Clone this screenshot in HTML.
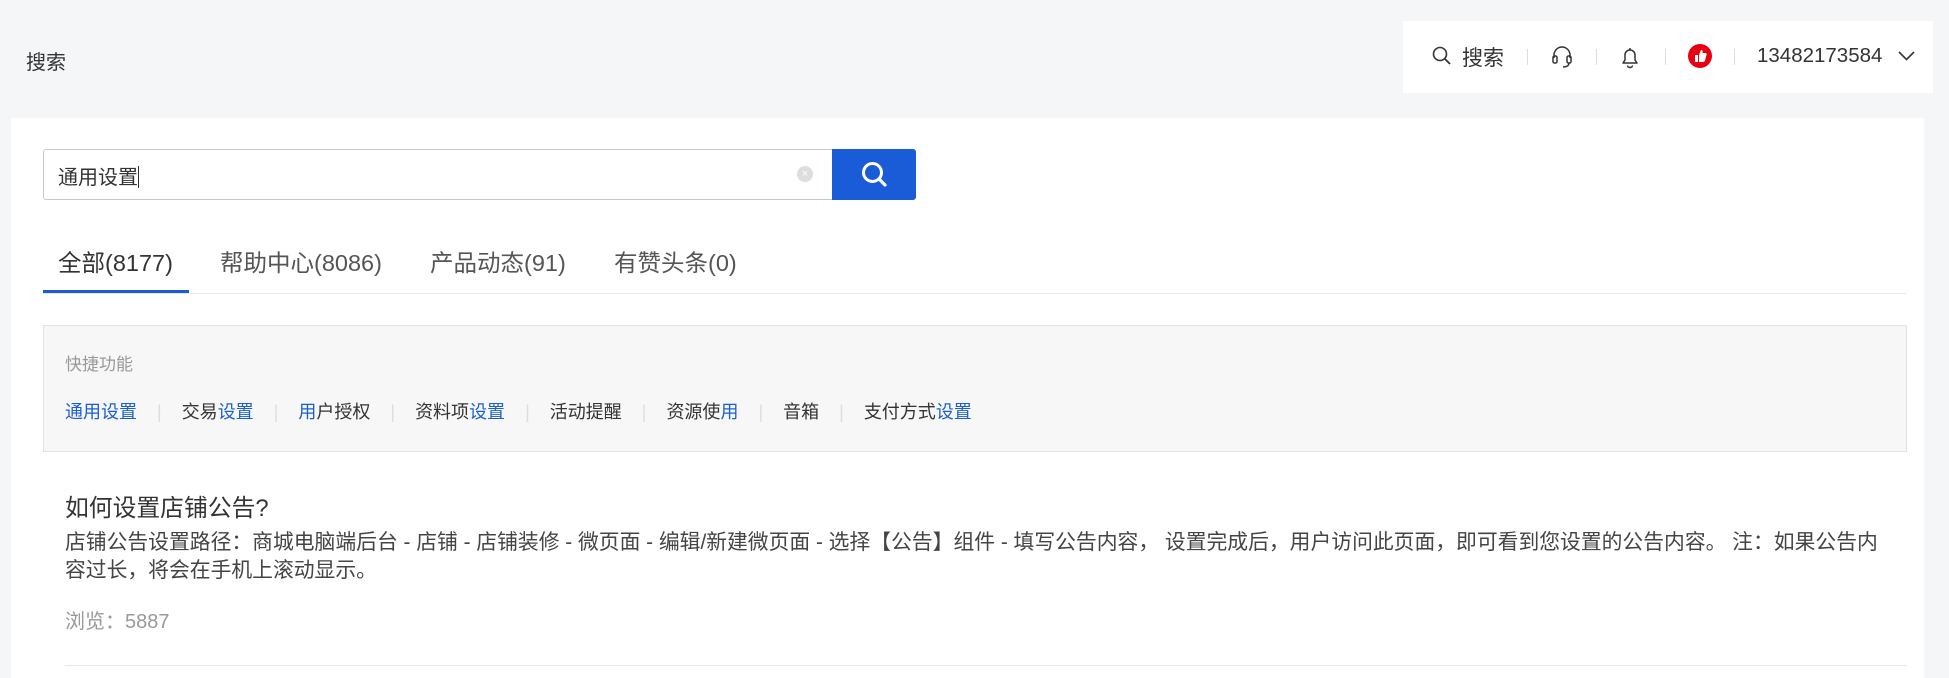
<!DOCTYPE html>
<html><head><meta charset="utf-8"><style>
*{margin:0;padding:0;box-sizing:border-box}
body{width:1949px;height:667px;background:#f5f6f8;font-family:"Liberation Sans","Noto Sans CJK SC",sans-serif;color:#333;position:relative;overflow:hidden}
.a{position:absolute;white-space:nowrap}
.blue{color:#1a5fd6}
.sep{position:absolute;width:1px;height:16px;background:#ddd}
.s{color:#ddd;margin:0 20px}
</style></head><body>
<div class="a" style="left:26px;top:46px;font-size:20px;color:#333">搜索</div>
<div class="a" style="left:1403px;top:21px;width:530px;height:72px;background:#fff"></div>
<svg class="a" style="left:1432px;top:46px" width="20" height="20" viewBox="0 0 20 20"><circle cx="8" cy="8" r="6.5" fill="none" stroke="#333" stroke-width="1.6"/><path d="M13 13l5 5" stroke="#333" stroke-width="1.8"/></svg>
<div class="a" style="left:1462px;top:42px;font-size:21px">搜索</div>
<div class="sep" style="left:1527px;top:49px"></div>
<svg class="a" style="left:1551px;top:45px" width="22" height="24" viewBox="0 0 22 24"><path d="M3 13V10a8 8 0 0 1 16 0v3" fill="none" stroke="#333" stroke-width="1.5"/><rect x="2" y="11" width="4" height="7" rx="1.5" fill="none" stroke="#333" stroke-width="1.5"/><rect x="16" y="11" width="4" height="7" rx="1.5" fill="none" stroke="#333" stroke-width="1.5"/><path d="M18 18c0 3-3 4-6 4" fill="none" stroke="#333" stroke-width="1.5"/></svg>
<div class="sep" style="left:1596px;top:49px"></div>
<svg class="a" style="left:1621px;top:45px" width="18" height="24" viewBox="0 0 18 24"><path d="M2 18h14l-2-3V10a5 5 0 0 0-10 0v5z" fill="none" stroke="#333" stroke-width="1.5" stroke-linejoin="round"/><path d="M9 3v2M6.5 20.5a2.5 2 0 0 0 5 0" fill="none" stroke="#333" stroke-width="1.5"/></svg>
<div class="sep" style="left:1665px;top:49px"></div>
<svg class="a" style="left:1688px;top:44px" width="24" height="24" viewBox="0 0 24 24"><circle cx="12" cy="12" r="12" fill="#e60012"/><path d="M7 11h3v7H7zM11 11l2-5c1.5 0 2 1 1.5 3h3c1 0 1.5 1 1 2l-1.5 5.5c-.3.8-.8 1.5-2 1.5H11z" fill="#fff"/></svg>
<div class="sep" style="left:1734px;top:49px"></div>
<div class="a" style="left:1757px;top:44px;font-size:20.5px">13482173584</div>
<svg class="a" style="left:1898px;top:50px" width="17" height="12" viewBox="0 0 17 12"><path d="M1 2l7.5 7.5L16 2" fill="none" stroke="#333" stroke-width="1.6"/></svg>

<div class="a" style="left:11px;top:118px;width:1913px;height:560px;background:#fff"></div>
<div class="a" style="left:43px;top:149px;width:790px;height:51px;border:1px solid #c8c8c8;border-right:none;border-radius:3px 0 0 3px;background:#fff"></div>
<div class="a" style="left:58px;top:161px;font-size:20px">通用设置<span style="display:inline-block;width:1px;height:22px;background:#333;vertical-align:-4px"></span></div>
<div class="a" style="left:797px;top:166px;width:16px;height:16px;border-radius:50%;background:#ddd;color:#fff;font-size:11px;line-height:16px;text-align:center">×</div>
<div class="a" style="left:832px;top:149px;width:84px;height:51px;background:#1a5cd7;border-radius:0 3px 3px 0"></div>
<svg class="a" style="left:860px;top:160px" width="28" height="28" viewBox="0 0 28 28"><circle cx="12.5" cy="12.5" r="9" fill="none" stroke="#fff" stroke-width="3"/><path d="M19 19l6 6" stroke="#fff" stroke-width="3.2" stroke-linecap="round"/></svg>

<div class="a" style="left:58px;top:244px;font-size:23.5px;color:#333">全部(8177)</div>
<div class="a" style="left:220px;top:244px;font-size:23.5px;color:#555">帮助中心(8086)</div>
<div class="a" style="left:430px;top:244px;font-size:23.5px;color:#555">产品动态(91)</div>
<div class="a" style="left:614px;top:244px;font-size:23.5px;color:#555">有赞头条(0)</div>
<div class="a" style="left:43px;top:293px;width:1864px;height:1px;background:#e8e8e8"></div>
<div class="a" style="left:43px;top:290px;width:146px;height:3px;background:#1a5cd7"></div>

<div class="a" style="left:43px;top:325px;width:1864px;height:127px;background:#f7f7f7;border:1px solid #e3e3e3"></div>
<div class="a" style="left:65px;top:350px;font-size:17px;color:#999">快捷功能</div>
<div class="a" style="left:65px;top:398px;font-size:18px">
<span class="blue">通用设置</span><span class="s">|</span>交易<span class="blue">设置</span><span class="s">|</span><span class="blue">用</span>户授权<span class="s">|</span>资料项<span class="blue">设置</span><span class="s">|</span>活动提醒<span class="s">|</span>资源使<span class="blue">用</span><span class="s">|</span>音箱<span class="s">|</span>支付方式<span class="blue">设置</span>
</div>

<div class="a" style="left:65px;top:488px;font-size:23.8px;color:#333">如何设置店铺公告?</div>
<div class="a" style="left:65px;top:529px;font-size:20.8px;line-height:28px;color:#444">店铺公告设置路径：商城电脑端后台 - 店铺 - 店铺装修 - 微页面 - 编辑/新建微页面 - 选择【公告】组件 - 填写公告内容， 设置完成后，用户访问此页面，即可看到您设置的公告内容。 注：如果公告内<br>容过长，将会在手机上滚动显示。</div>
<div class="a" style="left:65px;top:605px;font-size:20px;color:#999">浏览：5887</div>
<div class="a" style="left:65px;top:665px;width:1842px;height:1px;background:#e8e8e8"></div>
</body></html>
